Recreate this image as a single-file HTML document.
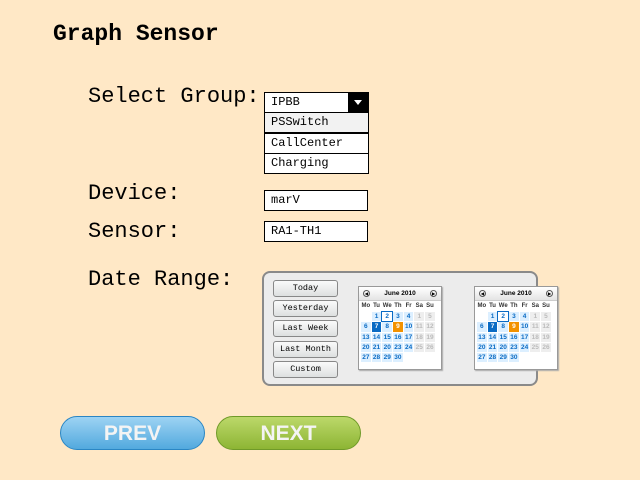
<!DOCTYPE html>
<html><head><meta charset="utf-8"><style>
*{margin:0;padding:0;box-sizing:border-box}
body{width:640px;height:480px;background:#ffe8c6;font-family:"Liberation Mono",monospace;position:relative;overflow:hidden;color:#000}
.a{position:absolute}
.t{font-weight:bold;font-size:23px;left:53px;top:21px}
.l{font-size:22px;left:88px}
.box{position:absolute;background:#fff;border:1px solid #000;font-size:12px;padding-left:6px;line-height:19px}
.btn{position:absolute;left:273px;width:65px;height:17px;border:1px solid #888;border-radius:3px;background:linear-gradient(#fafafa,#dde0e0);font-size:8.5px;text-align:center;line-height:15px}
.cal{position:absolute;top:286px;width:84px;height:84px;background:#fff;border:1px solid #999;box-shadow:1px 1px 1px #aaa;font-family:"Liberation Sans",sans-serif}
.cal .h{height:14px;background:linear-gradient(#fff,#e4e4e4);border-bottom:1px solid #ccc;font-size:6.5px;font-weight:bold;text-align:center;line-height:14px;position:relative}
.cal .h i{position:absolute;top:3px;width:7px;height:7px;border:1px solid #555;border-radius:50%;font-style:normal;font-size:4px;line-height:5px}
table{border-collapse:separate;border-spacing:1px;margin-left:1px;font-size:6.5px;font-weight:bold}
td{width:9.7px;height:9.3px;text-align:center;color:#0a6bc4;background:#dcefff;padding:0;line-height:9px}
tr.w td{background:none;color:#333;height:9px;font-size:6px}
td.e{background:none}
td.g{background:#eee;color:#bbb}
td.s{background:#0a6bc4;color:#fff}
td.o{background:#f39200;color:#fff}
td.c{outline:1px solid #0a6bc4;background:#fff}
.pb{position:absolute;top:416px;width:145px;height:34px;border-radius:17px;color:#f4f4f4;font-family:"Liberation Sans",sans-serif;font-weight:bold;font-size:21px;text-align:center;line-height:34px}
</style></head><body>
<div class="a t">Graph Sensor</div>
<div class="a l" style="top:84px">Select Group:</div>
<div class="a l" style="top:181px">Device:</div>
<div class="a l" style="top:219px">Sensor:</div>
<div class="a l" style="top:267px">Date Range:</div>

<div class="box" style="left:264px;top:92px;width:105px;height:21px">IPBB<div class="a" style="right:0;top:0;width:20px;height:19px;background:#000"><div class="a" style="left:6px;top:7px;border-left:4px solid transparent;border-right:4px solid transparent;border-top:5px solid #fff"></div></div></div>
<div class="box" style="left:264px;top:112px;width:105px;height:21px;background:#f2f2f2">PSSwitch</div>
<div class="box" style="left:264px;top:133px;width:105px;height:21px">CallCenter</div>
<div class="box" style="left:264px;top:153px;width:105px;height:21px">Charging</div>
<div class="box" style="left:264px;top:190px;width:104px;height:21px">marV</div>
<div class="box" style="left:264px;top:221px;width:104px;height:21px">RA1-TH1</div>

<div class="a" style="left:262px;top:271px;width:276px;height:115px;background:#ececec;border:2px solid #8a8a8a;border-radius:8px"></div>
<div class="btn" style="top:280px">Today</div>
<div class="btn" style="top:300px">Yesterday</div>
<div class="btn" style="top:320px">Last Week</div>
<div class="btn" style="top:341px">Last Month</div>
<div class="btn" style="top:361px">Custom</div>

<div class="cal" style="left:358px"><div class="h"><i style="left:4px">◀</i>June 2010<i style="right:4px">▶</i></div>
<table><tr class="w"><td>Mo</td><td>Tu</td><td>We</td><td>Th</td><td>Fr</td><td>Sa</td><td>Su</td></tr>
<tr><td class="e"></td><td>1</td><td class="c">2</td><td>3</td><td>4</td><td class="g">1</td><td class="g">5</td></tr>
<tr><td>6</td><td class="s">7</td><td>8</td><td class="o">9</td><td>10</td><td class="g">11</td><td class="g">12</td></tr>
<tr><td>13</td><td>14</td><td>15</td><td>16</td><td>17</td><td class="g">18</td><td class="g">19</td></tr>
<tr><td>20</td><td>21</td><td>20</td><td>23</td><td>24</td><td class="g">25</td><td class="g">26</td></tr>
<tr><td>27</td><td>28</td><td>29</td><td>30</td><td class="e"></td><td class="e"></td><td class="e"></td></tr></table></div>

<div class="cal" style="left:474px"><div class="h"><i style="left:4px">◀</i>June 2010<i style="right:4px">▶</i></div>
<table><tr class="w"><td>Mo</td><td>Tu</td><td>We</td><td>Th</td><td>Fr</td><td>Sa</td><td>Su</td></tr>
<tr><td class="e"></td><td>1</td><td class="c">2</td><td>3</td><td>4</td><td class="g">1</td><td class="g">5</td></tr>
<tr><td>6</td><td class="s">7</td><td>8</td><td class="o">9</td><td>10</td><td class="g">11</td><td class="g">12</td></tr>
<tr><td>13</td><td>14</td><td>15</td><td>16</td><td>17</td><td class="g">18</td><td class="g">19</td></tr>
<tr><td>20</td><td>21</td><td>20</td><td>23</td><td>24</td><td class="g">25</td><td class="g">26</td></tr>
<tr><td>27</td><td>28</td><td>29</td><td>30</td><td class="e"></td><td class="e"></td><td class="e"></td></tr></table></div>

<div class="pb" style="left:60px;background:linear-gradient(#9dd3f3,#52a9de);border:1px solid #2a86c4">PREV</div>
<div class="pb" style="left:216px;background:linear-gradient(#bcd86a,#8db534);border:1px solid #6f9a28">NEXT</div>
</body></html>
